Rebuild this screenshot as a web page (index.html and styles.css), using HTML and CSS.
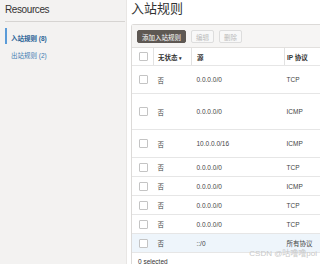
FILE: index.html
```html
<!DOCTYPE html>
<html lang="zh">
  <head>
    <meta charset="UTF-8" />
    <title>入站规则</title>
    <link rel="stylesheet" href="styles.css">
  </head>
  <body>
    <!-- Resources sidebar -->
    <aside class="sidebar">
      <h2 class="side-title">Resources</h2>
      <ul class="side-nav">
        <li class="active"><a href="#">入站规则 (8)</a></li>
        <li><a href="#">出站规则 (2)</a></li>
      </ul>
    </aside>

    <main class="main">
      <h1 class="page-title">入站规则</h1>

      <div class="panel">
        <div class="toolbar">
          <button class="btn primary">添加入站规则</button>
          <button class="btn" disabled>编辑</button>
          <button class="btn" disabled>删除</button>
        </div>

        <table class="rules">
          <thead>
            <tr>
              <th class="col-check"><span class="box"></span></th>
              <th class="col-state">无状态 <span class="caret">▾</span></th>
              <th class="col-src">源</th>
              <th class="col-proto">IP 协议</th>
            </tr>
          </thead>
          <tbody>
            <tr class="h28"><td class="col-check"><span class="box"></span></td><td>否</td><td class="col-src">0.0.0.0/0</td><td class="col-proto">TCP</td></tr>
            <tr class="h36"><td class="col-check"><span class="box"></span></td><td>否</td><td class="col-src">0.0.0.0/0</td><td class="col-proto">ICMP</td></tr>
            <tr class="h28"><td class="col-check"><span class="box"></span></td><td>否</td><td class="col-src">10.0.0.0/16</td><td class="col-proto">ICMP</td></tr>
            <tr><td class="col-check"><span class="box"></span></td><td>否</td><td class="col-src">0.0.0.0/0</td><td class="col-proto">TCP</td></tr>
            <tr><td class="col-check"><span class="box"></span></td><td>否</td><td class="col-src">0.0.0.0/0</td><td class="col-proto">ICMP</td></tr>
            <tr><td class="col-check"><span class="box"></span></td><td>否</td><td class="col-src">0.0.0.0/0</td><td class="col-proto">TCP</td></tr>
            <tr><td class="col-check"><span class="box"></span></td><td>否</td><td class="col-src">0.0.0.0/0</td><td class="col-proto">TCP</td></tr>
            <tr class="highlight"><td class="col-check"><span class="box"></span></td><td>否</td><td class="col-src">::/0</td><td class="col-proto">所有协议</td></tr>
          </tbody>
        </table>

        <div class="footer">0 selected</div>
      </div>
    </main>

    <div class="watermark">CSDN @咕噜噜poi</div>
  </body>
</html>
```

FILE: styles.css
```css
/* Global */
body {
  margin: 0;
  display: flex;
  height: 264px;
  overflow: hidden;
  background: #fff;
  font-family: "Liberation Sans", "Noto Sans CJK SC", Arial, sans-serif;
  color: #333;
}

/* Sidebar */
.sidebar {
  width: 120px;
  flex-shrink: 0;
  background: #f3f2f1;
  border-right: 1px solid #e8e6e4;
  padding: 0 1px 0 5px;
}

.side-title {
  margin: 0;
  padding: 4px 0 5px;
  font-size: 10px;
  font-weight: normal;
  letter-spacing: -0.4px;
  line-height: 12px;
  color: #333;
  border-bottom: 1px solid #d6d4d2;
}

.side-nav {
  list-style: none;
  margin: 6px 0 0;
  padding: 0;
}

.side-nav li {
  height: 16px;
  line-height: 16px;
  padding-left: 4px;
  border-left: 2px solid transparent;
  margin-bottom: 1px;
}

.side-nav a {
  font-size: 6.5px;
  color: #3f7cb1;
  text-decoration: none;
}

.side-nav li.active {
  border-left-color: #5a9bd8;
}

.side-nav li.active a {
  color: #2b6497;
  font-weight: bold;
}

/* Main */
.main {
  flex: 1;
  min-width: 0;
  padding-left: 4px;
  overflow: hidden;
}

.page-title {
  margin: 0;
  height: 24px;
  font-size: 13px;
  line-height: 17px;
  font-weight: normal;
  color: #333;
}

.panel {
  width: 220px;
  border: 1px solid #dcdad8;
  border-right: none;
  border-radius: 3px 0 0 0;
}

.toolbar {
  display: flex;
  gap: 5px;
  height: 23px;
  box-sizing: border-box;
  padding: 5px 5px 0;
  background: #f6f5f4;
  border-bottom: 1px solid #e2e0de;
}

.btn {
  height: 13px;
  padding: 0 4px;
  font-family: inherit;
  font-size: 6.5px;
  color: #bbb;
  background: #f8f8f8;
  border: 1px solid #ddd;
  border-radius: 2px;
}

.btn.primary {
  color: #fff;
  background: #5e5853;
  border-color: #5e5853;
}

/* Table */
.rules {
  width: 100%;
  border-collapse: collapse;
  font-size: 6.5px;
  table-layout: fixed;
}

.rules th,
.rules td {
  text-align: left;
  padding: 0 0 0 4px;
  height: 18px;
  border-bottom: 1px solid #e6e6e6;
  color: #444;
  white-space: nowrap;
}

.rules th {
  height: 17px;
  font-weight: bold;
  color: #333;
  border-left: 1px solid #e2e2e2;
}

.rules th:first-child {
  border-left: none;
}

.rules .col-check {
  width: 14px;
  padding-left: 7px;
}

.col-state {
  width: 33px;
}

.rules .col-src {
  width: 87px;
  padding-left: 5px;
}

.rules .col-proto {
  padding-left: 2px;
}

.caret {
  font-size: 5px;
}

.box {
  display: inline-block;
  width: 7px;
  height: 7px;
  border: 1px solid #c4c4c4;
  border-radius: 1px;
  background: #fff;
  vertical-align: middle;
}

.rules tr.h28 td {
  height: 27px;
}

.rules tr.h36 td {
  height: 35px;
}

.rules tr.highlight td {
  background: #eef5fb;
}

.footer {
  padding: 5px 6px;
  font-size: 6.5px;
  color: #333;
}

/* Watermark overlay */
.watermark {
  position: absolute;
  right: 3px;
  bottom: 6px;
  font-size: 8px;
  color: #c8c8c8;
}
```
